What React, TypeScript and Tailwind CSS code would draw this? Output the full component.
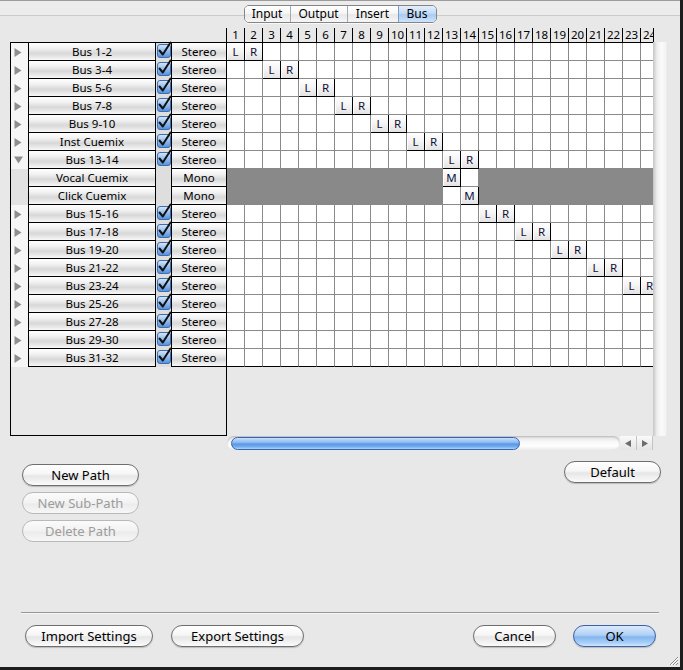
import React from "react";

type CellState = "e" | "g" | "L" | "R" | "M";
type Kind = "closed" | "open" | "sub";
interface RowDef {
  name: string;
  mode: string;
  kind: Kind;
  cells: CellState[];
}

const NCOLS = 24;

function buildRows(): RowDef[] {
  const rows: RowDef[] = [];
  const first = ["Bus 1-2", "Bus 3-4", "Bus 5-6", "Bus 7-8", "Bus 9-10", "Inst Cuemix", "Bus 13-14"];
  first.forEach((n, i) => {
    const cells: CellState[] = Array(NCOLS).fill("e");
    cells[2 * i] = "L";
    cells[2 * i + 1] = "R";
    rows.push({ name: n, mode: "Stereo", kind: i === 6 ? "open" : "closed", cells });
  });
  const vocal: CellState[] = Array(NCOLS).fill("g");
  vocal[12] = "M";
  vocal[13] = "e";
  rows.push({ name: "Vocal Cuemix", mode: "Mono", kind: "sub", cells: vocal });
  const click: CellState[] = Array(NCOLS).fill("g");
  click[12] = "e";
  click[13] = "M";
  rows.push({ name: "Click Cuemix", mode: "Mono", kind: "sub", cells: click });
  for (let k = 7; k <= 15; k++) {
    const cells: CellState[] = Array(NCOLS).fill("e");
    if (2 * k < NCOLS) cells[2 * k] = "L";
    if (2 * k + 1 < NCOLS) cells[2 * k + 1] = "R";
    rows.push({ name: `Bus ${2 * k + 1}-${2 * k + 2}`, mode: "Stereo", kind: "closed", cells });
  }
  return rows;
}

const ROWS = buildRows();

function cellClass(s: CellState, last: boolean): string {
  if (s === "g") return "w-[18px] h-[18px] shrink-0 bg-[#898989]";
  if (s === "e")
    return last
      ? "w-[18px] h-[18px] shrink-0 bg-white border-r border-[#8a8a8a] border-b border-b-black"
      : "w-[18px] h-[18px] shrink-0 bg-white border-r border-b border-[#8a8a8a]";
  return "w-[18px] h-[18px] shrink-0 border-r border-b border-black flex items-center justify-center text-[11.5px] leading-none text-[#10103a] bg-[linear-gradient(to_bottom,#ffffff,#f4f4f4_50%,#e3e3e3)] shadow-[inset_1px_1px_0_#ffffff]";
}

const BEVEL =
  "bg-[linear-gradient(to_bottom,#ffffff_0%,#f2f2f2_30%,#d8d8d8_60%,#ebebeb_85%,#f8f8f8_100%)]";

function Triangle({ open }: { open: boolean }) {
  return open ? (
    <svg width="9" height="8" viewBox="0 0 9 8">
      <polygon points="0,0.5 9,0.5 4.5,7.5" fill="#8e8e8e" />
    </svg>
  ) : (
    <svg width="8" height="9" viewBox="0 0 8 9">
      <polygon points="0.5,0 7.5,4.5 0.5,9" fill="#8e8e8e" />
    </svg>
  );
}

function CheckBox() {
  return (
    <svg width="15" height="17" viewBox="0 0 15 17" className="overflow-visible">
      <defs>
        <linearGradient id="cbg" x1="0" y1="0" x2="0" y2="1">
          <stop offset="0" stopColor="#d9e8fa" />
          <stop offset="0.5" stopColor="#93bcec" />
          <stop offset="1" stopColor="#4f8fdd" />
        </linearGradient>
      </defs>
      <rect x="1.5" y="1.5" width="13" height="13" rx="2.5" fill="url(#cbg)" stroke="#3d6cb0" />
      <path d="M3.5 7.5 L6.8 11.5 L14.5 -0.5" stroke="#111111" strokeWidth="2" fill="none" strokeLinecap="round" strokeLinejoin="round" />
    </svg>
  );
}

function PanelRow({ row }: { row: RowDef }) {
  const sub = row.kind === "sub";
  return (
    <div className="flex h-[18px]">
      <div
        className={
          sub
            ? "w-[17px] shrink-0 bg-[#e2e2e2]"
            : "w-[17px] shrink-0 bg-[#f6f6f6] flex items-center pl-[3px]"
        }
      >
        {!sub && <Triangle open={row.kind === "open"} />}
      </div>
      <div
        className={`w-[128px] shrink-0 border-l border-r border-b border-black ${BEVEL} flex items-center justify-center text-[11.5px] leading-none text-black`}
      >
        {row.name}
      </div>
      <div className="w-[15px] shrink-0 bg-[#dedede] relative">
        {!sub && <CheckBox />}
      </div>
      <div
        className={`w-[55px] shrink-0 border-l border-b border-black ${BEVEL} flex items-center justify-center text-[11.5px] leading-none text-black`}
      >
        {row.mode}
      </div>
    </div>
  );
}

function AquaButton({
  className,
  children,
  variant = "normal",
}: {
  className: string;
  children: React.ReactNode;
  variant?: "normal" | "disabled" | "default";
}) {
  const base = "h-[22px] rounded-full flex items-center justify-center text-[13px] leading-none shrink-0";
  const v =
    variant === "default"
      ? "border border-[#3f5fa6] text-black bg-[linear-gradient(to_bottom,#dcebfc_0%,#b0d0f5_45%,#84b6ef_55%,#a9d0fa_85%,#d2e8fe_100%)] shadow-[0_1px_1px_rgba(0,0,0,0.2)]"
      : variant === "disabled"
      ? "border border-[#b9b9b9] text-[#9c9c9c] bg-[linear-gradient(to_bottom,#fbfbfb_0%,#f2f2f2_50%,#ebebeb_55%,#f7f7f7_100%)]"
      : "border border-[#6e6e6e] text-black bg-[linear-gradient(to_bottom,#ffffff_0%,#f6f6f6_45%,#e6e6e6_55%,#fbfbfb_100%)] shadow-[0_1px_1px_rgba(0,0,0,0.2)]";
  return <div className={`${base} ${v} ${className}`}>{children}</div>;
}

function Segmented() {
  const seg =
    "h-full flex items-center justify-center text-[12px] leading-none text-black bg-[linear-gradient(to_bottom,#ffffff_0%,#f7f7f7_45%,#e8e8e8_55%,#f6f6f6_100%)]";
  return (
    <div className="flex h-[18px] rounded-[5px] border border-[#858585] overflow-hidden shadow-[0_1px_0_rgba(255,255,255,0.7)]">
      <div className={`w-[45px] ${seg}`}>Input</div>
      <div className={`w-[57px] border-l border-[#a9a9a9] ${seg}`}>Output</div>
      <div className={`w-[51px] border-l border-[#a9a9a9] ${seg}`}>Insert</div>
      <div className="w-[38px] h-full border-l border-[#7d9cc8] flex items-center justify-center text-[12px] leading-none text-black bg-[linear-gradient(to_bottom,#e4effc_0%,#c4dbf6_45%,#a9cbf2_55%,#cfe4fb_100%)]">
        Bus
      </div>
    </div>
  );
}

export default function App() {
  return (
    <div className="w-[683px] h-[670px] bg-[#1c1d1c] font-['Noto_Sans',sans-serif] overflow-hidden">
      <div className="relative w-[680px] h-[667px] bg-[#e8e8e8] flex flex-col overflow-hidden">
        <div className="h-[16px] shrink-0 bg-[#ececec] border-t border-[#9c9c9c] border-b border-b-[#cbcbcb]" />
        <div className="-mt-[11px] flex justify-center">
          <Segmented />
        </div>

        <div className="mt-[5px] flex pl-[10px]">
          <div className="w-[217px] shrink-0 flex flex-col">
            <div className="h-[14px] border-r border-black" />
            <div className="h-[394px] border border-black bg-[#e8e8e8] flex flex-col">
              {ROWS.map((r, i) => (
                <PanelRow key={i} row={r} />
              ))}
            </div>
          </div>

          <div className="flex flex-col">
            <div className="flex">
              <div className="w-[426px] overflow-hidden">
                <div className="flex h-[15px] border-b border-black w-max">
                  {Array.from({ length: NCOLS }, (_, c) => (
                    <div
                      key={c}
                      className="w-[18px] h-[14px] shrink-0 border-r border-black text-[11.5px] leading-[14px] text-center text-black"
                    >
                      {c + 1}
                    </div>
                  ))}
                </div>
                {ROWS.map((r, i) => (
                  <div key={i} className="flex w-max">
                    {r.cells.map((s, c) => (
                      <div key={c} className={cellClass(s, i === ROWS.length - 1)}>
                        {s === "L" || s === "R" || s === "M" ? s : null}
                      </div>
                    ))}
                  </div>
                ))}
              </div>
              <div className="w-[15px] shrink-0 flex flex-col">
                <div className="h-[14px] border-l border-black" />
                <div className="h-[394px] bg-[linear-gradient(to_right,#c4c4c4_0%,#ececec_25%,#fbfbfb_55%,#f3f3f3_85%,#e2e2e2_100%)]" />
              </div>
            </div>
            <div className="flex h-[14px] items-stretch">
              <div className="w-[393px] h-[14px] rounded-full bg-[linear-gradient(to_bottom,#e2e2e2_0%,#f7f7f7_40%,#ffffff_70%,#ececec_100%)] shadow-[inset_0_1px_2px_rgba(0,0,0,0.2)] flex items-center pl-[4px]">
                <div className="w-[289px] h-[13px] rounded-full border border-[#3566b3] bg-[linear-gradient(to_bottom,#c9e0fa_0%,#8dbbf0_40%,#5a97e4_55%,#74acef_80%,#b3d6fb_100%)]" />
              </div>
              <div className="w-[33px] h-[14px] flex bg-[linear-gradient(to_bottom,#fafafa,#e4e4e4)]">
                <div className="w-[17px] border-r border-[#c4c4c4] flex items-center justify-center">
                  <svg width="6" height="7" viewBox="0 0 6 7">
                    <polygon points="6,0 0,3.5 6,7" fill="#6d6d6d" />
                  </svg>
                </div>
                <div className="w-[16px] border-r border-[#c4c4c4] flex items-center justify-center">
                  <svg width="6" height="7" viewBox="0 0 6 7">
                    <polygon points="0,0 6,3.5 0,7" fill="#6d6d6d" />
                  </svg>
                </div>
              </div>
            </div>
          </div>
        </div>

        <div className="flex justify-between items-start">
          <div className="ml-[22px] mt-[14px] flex flex-col gap-[6px]">
            <AquaButton className="w-[117px]">New Path</AquaButton>
            <AquaButton className="w-[117px]" variant="disabled">
              New Sub-Path
            </AquaButton>
            <AquaButton className="w-[117px]" variant="disabled">
              Delete Path
            </AquaButton>
          </div>
          <div className="mt-[11px] mr-[19px]">
            <AquaButton className="w-[97px]">Default</AquaButton>
          </div>
        </div>

        <div className="mt-[70px] ml-[21px] w-[638px] h-[2px] border-t border-[#979797] border-b border-b-[#f6f6f6]" />

        <div className="mt-[11px] flex justify-between pl-[25px] pr-[24px]">
          <div className="flex gap-[18px]">
            <AquaButton className="w-[128px]">Import Settings</AquaButton>
            <AquaButton className="w-[133px]">Export Settings</AquaButton>
          </div>
          <div className="flex gap-[17px]">
            <AquaButton className="w-[83px]">Cancel</AquaButton>
            <AquaButton className="w-[83px]" variant="default">
              OK
            </AquaButton>
          </div>
        </div>

        <svg className="absolute right-[1px] bottom-[1px]" width="12" height="12" viewBox="0 0 12 12">
          <path d="M11 3 L3 11 M11 6 L6 11 M11 9 L9 11" stroke="#8c8c8c" strokeWidth="1" />
          <path d="M11 4 L4 11 M11 7 L7 11" stroke="#ffffff" strokeWidth="1" />
        </svg>
      </div>
    </div>
  );
}
